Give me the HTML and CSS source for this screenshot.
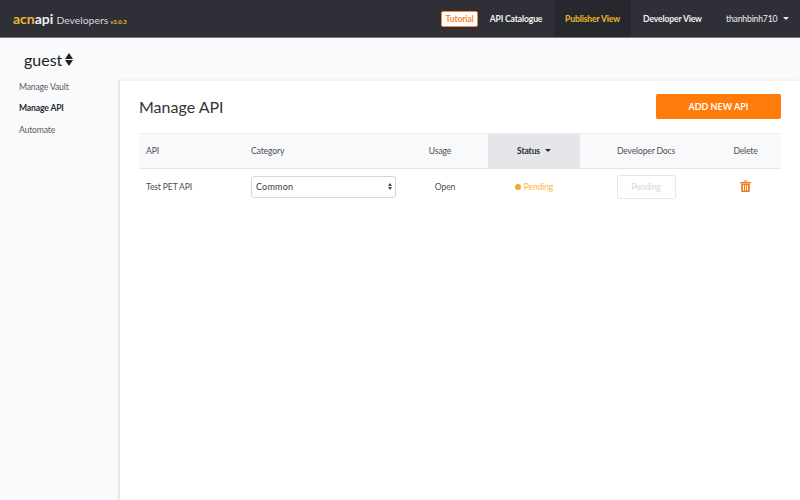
FILE: index.html
```html
<!DOCTYPE html>
<html lang="en">
<head>
    <meta charset="UTF-8">
    <title>Manage API</title>
    <link rel="stylesheet" href="styles.css">
</head>
<body>
<div class="topbar">
    <div class="brand">
        <span class="logo"><span class="logo-acn">acn</span>api</span>
        <span class="brand-name">Developers</span>
        <span class="version">v3.0.3</span>
    </div>
    <div class="nav">
        <span class="tutorial">Tutorial</span>
        <span class="nav-item catalogue">API Catalogue</span>
        <span class="nav-item publisher">Publisher View</span>
        <span class="nav-item developer">Developer View</span>
        <span class="nav-item user">thanhbinh710<span class="caret-small"></span></span>
    </div>
</div>

<div class="page">
    <div class="sidebar">
        <div class="org">
            <span>guest</span>
            <span class="org-arrows">
                <span class="arrow-up"></span>
                <span class="arrow-down"></span>
            </span>
        </div>
        <ul class="side-menu">
            <li>Manage Vault</li>
            <li class="current">Manage API</li>
            <li>Automate</li>
        </ul>
    </div>

    <div class="main-wrap">
        <div class="main">
            <div class="title-row">
                <h1>Manage API</h1>
                <button class="add-btn">ADD NEW API</button>
            </div>

            <div class="table-head">
                <div class="cell cell-api">API</div>
                <div class="cell cell-category">Category</div>
                <div class="cell cell-usage usage-head">Usage</div>
                <div class="cell cell-status status-head">Status<span class="caret"></span></div>
                <div class="cell cell-docs">Developer Docs</div>
                <div class="cell cell-delete">Delete</div>
            </div>
            <div class="table-row">
                <div class="cell cell-api">Test PET API</div>
                <div class="cell cell-category">
                    <div class="fake-select">
                        <span>Common</span>
                        <span class="select-arrows">
                            <span class="tiny-up"></span>
                            <span class="tiny-down"></span>
                        </span>
                    </div>
                </div>
                <div class="cell cell-usage">Open</div>
                <div class="cell cell-status pending"><span class="dot"></span>Pending</div>
                <div class="cell cell-docs"><span class="docs-btn">Pending</span></div>
                <div class="cell cell-delete">
                    <svg class="trash" width="11" height="12" viewBox="0 0 11 12">
                        <path d="M0 2h11v1.2H0zM3.5 2l.6-1.6h2.8L7.5 2H6.4l-.3-.7H4.9L4.6 2z" fill="#f07d1a"/>
                        <path d="M1.2 3.6h8.6V11a1 1 0 0 1-1 1H2.2a1 1 0 0 1-1-1zM3 5v5.4h1V5zm2 0v5.4h1V5zm2 0v5.4h1V5z" fill="#f07d1a" fill-rule="evenodd"/>
                    </svg>
                </div>
            </div>
        </div>
    </div>
</div>
</body>
</html>
```
FILE: styles.css
```css
* {
    padding: 0;
    margin: 0;
    list-style: none;
    border: 0;
    box-sizing: border-box;
}

html, body {
    height: 100%;
    overflow: hidden;
}

body {
    display: flex;
    flex-direction: column;
    font-family: Lato, "Liberation Sans", sans-serif;
    font-size: 8.6px;
    letter-spacing: -0.15px;
    color: #4f4f55;
    background: #f9fafb;
}

/* top bar */
.topbar {
    height: 38px;
    flex: none;
    display: flex;
    justify-content: space-between;
    background: #2f2f38;
    border-bottom: 1px solid #77777c;
}

.brand {
    display: flex;
    align-items: baseline;
    padding: 10px 0 0 13px;
    color: #d8d8da;
}

.logo {
    font-size: 14px;
    font-weight: 700;
    letter-spacing: 0;
    color: #f0f0f0;
}

.logo-acn {
    color: #eeb82c;
}

.brand-name {
    font-size: 10.4px;
    letter-spacing: 0;
    margin-left: 3px;
}

.version {
    font-size: 6px;
    font-weight: 700;
    letter-spacing: 0;
    color: #eeb82c;
    margin-left: 2px;
}

.nav {
    display: flex;
    align-items: center;
    font-size: 8.6px;
    font-weight: 700;
    color: #f2f2f2;
}

.tutorial {
    width: 37px;
    height: 16px;
    line-height: 14px;
    text-align: center;
    color: #f0883a;
    background: #fff;
    border: 1px solid #f0883a;
    border-radius: 2px;
}

.nav-item {
    height: 37px;
    line-height: 38px;
    white-space: nowrap;
}

.catalogue {
    width: 76px;
    text-align: center;
}

.publisher {
    width: 77px;
    text-align: center;
    color: #eeb82c;
    background: #27272e;
}

.developer {
    width: 83px;
    text-align: center;
}

.user {
    width: 86px;
    padding-left: 12px;
    font-weight: 400;
}

.caret-small {
    display: inline-block;
    margin-left: 6px;
    vertical-align: 2px;
    border-top: 3px solid #eee;
    border-left: 3px solid transparent;
    border-right: 3px solid transparent;
}

/* page */
.page {
    flex: 1;
    display: flex;
}

.sidebar {
    width: 119px;
    flex: none;
}

.org {
    display: flex;
    align-items: center;
    height: 44px;
    padding: 0 0 2px 24px;
    font-size: 16px;
    letter-spacing: 0;
    color: #222;
}

.org-arrows {
    display: flex;
    flex-direction: column;
    gap: 1px;
    margin-left: 3px;
}

.arrow-up {
    border-bottom: 6px solid #222;
    border-left: 4px solid transparent;
    border-right: 4px solid transparent;
}

.arrow-down {
    border-top: 6px solid #222;
    border-left: 4px solid transparent;
    border-right: 4px solid transparent;
}

.side-menu li {
    height: 21.4px;
    line-height: 11px;
    padding-left: 19px;
    color: #5c5c62;
}

.side-menu li.current {
    color: #2c2c32;
    font-weight: 700;
}

.main-wrap {
    flex: 1;
    display: flex;
    flex-direction: column;
    padding-top: 42px;
}

.main {
    flex: 1;
    padding: 0 19px;
    background: #fff;
    border-top: 1px solid #f1f2f4;
    border-left: 1px solid #e4e5e8;
    box-shadow: -1px 0 2px #e8e9ec;
}

.title-row {
    display: flex;
    align-items: flex-start;
    justify-content: space-between;
    height: 52px;
    padding-top: 13px;
}

h1 {
    font-size: 16px;
    font-weight: 400;
    line-height: 25px;
    letter-spacing: 0;
    color: #333338;
}

.add-btn {
    width: 125px;
    height: 25px;
    font-family: inherit;
    font-size: 9px;
    font-weight: 700;
    color: #fff;
    background: #ff7b0a;
    border-radius: 2px;
}

/* table */
.table-head, .table-row {
    display: flex;
}

.table-head {
    height: 36px;
    background: #f8f9fb;
    border-top: 1px solid #eeeff2;
    border-bottom: 1px solid #e3e4e8;
}

.table-head .cell {
    padding-bottom: 1px;
}

.table-row {
    height: 35px;
}

.cell {
    display: flex;
    align-items: center;
    white-space: nowrap;
}

.cell-api {
    width: 105px;
    padding-left: 7px;
}

.cell-category {
    width: 158px;
    padding-left: 7px;
}

.cell-usage {
    width: 86px;
    justify-content: center;
    padding-left: 0;
}

.usage-head {
    padding-right: 10px;
}

.cell-status {
    width: 92px;
    justify-content: center;
}

.status-head {
    font-weight: 700;
    color: #2c2c32;
    background: #e4e6e9;
}

.caret {
    margin-left: 5px;
    border-top: 3px solid #2c2c32;
    border-left: 3.5px solid transparent;
    border-right: 3.5px solid transparent;
}

.cell-docs {
    width: 132px;
    justify-content: center;
}

.cell-delete {
    width: 69px;
    justify-content: center;
    padding: 0 2px 2px 0;
}

.fake-select {
    width: 145px;
    height: 22px;
    display: flex;
    align-items: center;
    justify-content: space-between;
    padding: 0 3px 0 4px;
    font-size: 9px;
    letter-spacing: 0.2px;
    color: #3a3a40;
    border: 1px solid #d6d7db;
    border-radius: 3px;
}

.select-arrows {
    display: flex;
    flex-direction: column;
    gap: 1px;
}

.tiny-up {
    border-bottom: 3px solid #444;
    border-left: 2px solid transparent;
    border-right: 2px solid transparent;
}

.tiny-down {
    border-top: 3px solid #444;
    border-left: 2px solid transparent;
    border-right: 2px solid transparent;
}

.pending {
    color: #f9b83c;
}

.dot {
    width: 6px;
    height: 6px;
    margin-right: 3px;
    background: #f9a825;
    border-radius: 50%;
}

.docs-btn {
    width: 59px;
    height: 24px;
    line-height: 22px;
    text-align: center;
    color: #d6d8de;
    border: 1px solid #e6e7ea;
    border-radius: 2px;
}
```
